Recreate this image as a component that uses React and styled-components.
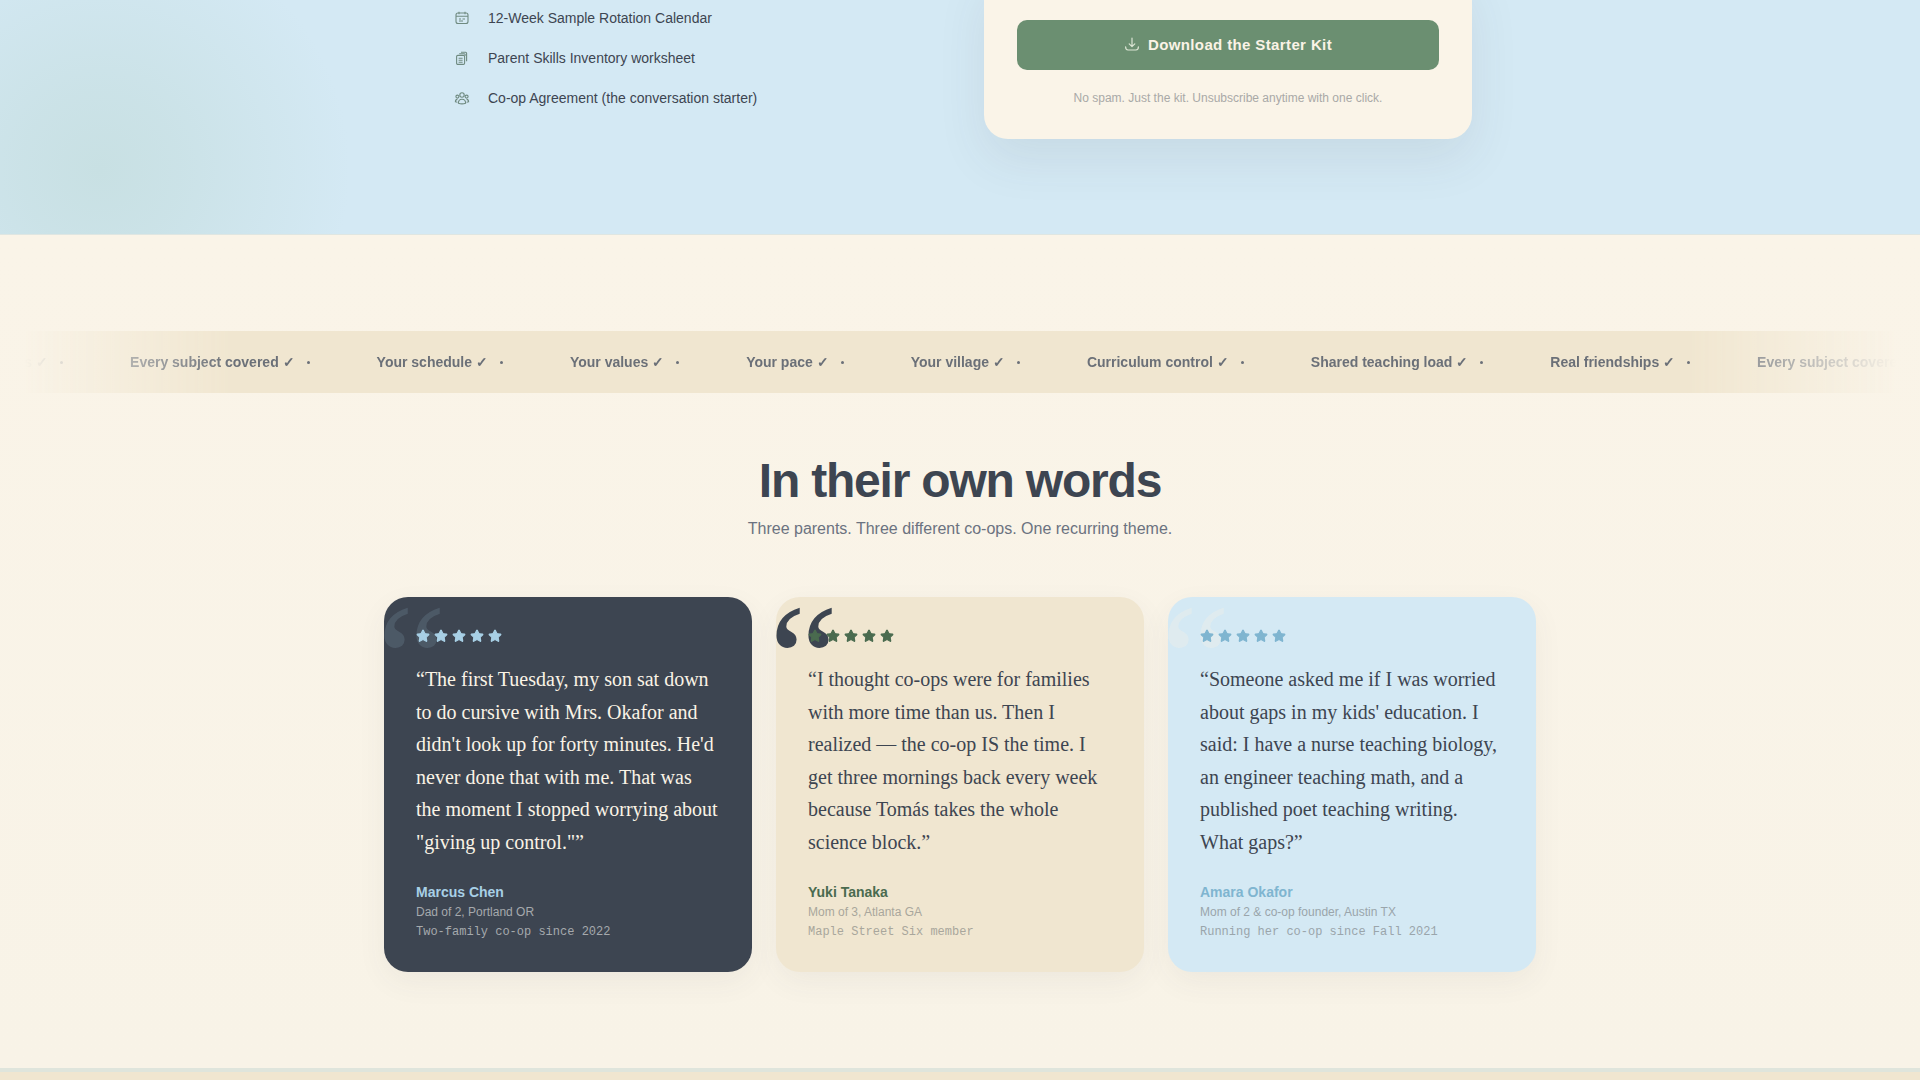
import React from "react";
import styled, { createGlobalStyle } from "styled-components";
import { Star } from "lucide-react";

const GlobalStyle = createGlobalStyle`
  html, body {
    margin: 0;
    padding: 0;
    background: #faf4e8;
    font-family: "Liberation Sans", Arial, sans-serif;
    line-height: 1.625;
    overflow: hidden;
  }
  * {
    box-sizing: border-box;
  }
`;

const Page = styled.div`
  height: 1080px;
  overflow: hidden;
  display: flex;
  flex-direction: column;
`;

const Hero = styled.section`
  height: 235px;
  flex-shrink: 0;
  background: radial-gradient(circle at 100px 170px, #c8e0e3 0, rgba(200, 224, 227, 0.75) 80px, rgba(212, 233, 244, 0) 250px), #d4e9f4;
  border-bottom: 1px solid #dfe6e2;
`;

const HeroInner = styled.div`
  width: 1024px;
  margin: 0 auto;
  display: grid;
  grid-template-columns: 1fr 488px;
`;

const KitList = styled.ul`
  list-style: none;
  margin: -2px 0 0;
  padding: 0 0 0 6px;
`;

const KitItem = styled.li`
  height: 40px;
  display: flex;
  align-items: center;
  gap: 18px;
  font-size: 14px;
  color: #3d4551;
  svg {
    flex-shrink: 0;
    color: #6f8a80;
  }
`;

const KitCard = styled.div`
  margin-top: -30px;
  height: 169px;
  padding: 50px 33px 0;
  background: #faf4e8;
  border-radius: 24px;
  box-shadow: 0 20px 50px rgba(61, 69, 81, 0.09);
`;

const DownloadButton = styled.button`
  width: 100%;
  height: 50px;
  padding: 0 0 2px;
  border: none;
  border-radius: 10px;
  background: #6b8f71;
  color: #faf3e6;
  font-family: inherit;
  font-size: 15px;
  font-weight: 700;
  letter-spacing: 0.375px;
  display: flex;
  align-items: center;
  justify-content: center;
  gap: 8px;
  svg {
    color: #dbe5d4;
  }
`;

const Fineprint = styled.p`
  margin: 19px 0 0;
  font-size: 12px;
  line-height: 19.5px;
  text-align: center;
  color: #a9a9a7;
`;

const Words = styled.section`
  flex: 1;
  padding-top: 96px;
  background: linear-gradient(180deg, #faf4e8 0%, #f8f3e7 100%);
`;

const Marquee = styled.div`
  height: 62px;
  overflow: hidden;
  background: #f0e6d0;
  display: flex;
  align-items: center;
  mask-image: linear-gradient(90deg, transparent 24px, #000 232px, #000 1688px, transparent 1896px);
`;

const Track = styled.div`
  display: flex;
  align-items: center;
  flex-shrink: 0;
  white-space: nowrap;
  transform: translateX(-1497px);
`;

const TickerItem = styled.span`
  font-size: 14px;
  font-weight: 700;
  color: #6b7078;
  display: flex;
  align-items: center;
`;

const TickerDot = styled.i`
  width: 3px;
  height: 3px;
  border-radius: 50%;
  background: #6b7078;
  margin: 0 67px 0 12px;
`;

const Heading = styled.h2`
  margin: 64px 0 0;
  font-size: 48px;
  line-height: 48px;
  font-weight: 700;
  letter-spacing: -1.2px;
  text-align: center;
  color: #3d4551;
`;

const Subtitle = styled.p`
  margin: 11px 0 0;
  font-size: 16px;
  line-height: 26px;
  text-align: center;
  color: #6b7280;
`;

const Cards = styled.div`
  width: 1152px;
  margin: 55px auto 0;
  display: grid;
  grid-template-columns: repeat(3, 368px);
  gap: 24px;
`;

const tones = {
  dark: { bg: "#3d4551", text: "#faf3e6", star: "#a8d0e6", name: "#a8d0e6", meta: "#a5a9ad", mark: "rgba(168, 208, 230, 0.15)" },
  sand: { bg: "#f0e6d0", text: "#3d4551", star: "#4a6b4f", name: "#4a6b4f", meta: "#a9a69c", mark: "#3d4551" },
  sky: { bg: "#d4e9f4", text: "#3d4551", star: "#7fb5d0", name: "#7fb5d0", meta: "#9aa5ab", mark: "rgba(250, 243, 230, 0.3)" },
};

const Card = styled.article`
  position: relative;
  height: 375px;
  padding: 32px;
  border-radius: 24px;
  background: ${(p) => tones[p.$tone].bg};
  box-shadow: 0 10px 30px rgba(61, 69, 81, 0.06);
`;

const QuoteMark = styled.span`
  position: absolute;
  top: -15px;
  left: -7px;
  font-family: "Liberation Serif", "Times New Roman", serif;
  font-size: 156px;
  line-height: 156px;
  color: ${(p) => tones[p.$tone].mark};
`;

const Stars = styled.div`
  position: relative;
  display: flex;
  gap: 4px;
  height: 14px;
  margin-bottom: 20px;
  color: ${(p) => tones[p.$tone].star};
`;

const Quote = styled.p`
  margin: 0 0 23px;
  font-family: "Liberation Serif", "Times New Roman", serif;
  font-size: 20px;
  line-height: 32.5px;
  color: ${(p) => tones[p.$tone].text};
`;

const Name = styled.div`
  font-size: 14px;
  line-height: 22px;
  font-weight: 700;
  color: ${(p) => tones[p.$tone].name};
`;

const Meta = styled.div`
  font-size: 12px;
  line-height: 19.5px;
  color: ${(p) => tones[p.$tone].meta};
`;

const MonoMeta = styled(Meta)`
  font-family: "Liberation Mono", "Courier New", monospace;
`;

const FooterBar = styled.div`
  height: 12px;
  flex-shrink: 0;
  background: #f0e6d0;
  border-top: 4px solid #dfe5dc;
`;

const CalendarIcon = () => (
  <svg width="16" height="16" viewBox="0 0 16 16" fill="none" stroke="currentColor" strokeWidth="1.1">
    <rect x="2" y="3" width="12" height="10.5" rx="2" />
    <path d="M2 6.2h12M5 1.8v2.4M11 1.8v2.4M5 9h2M8.5 9h2.5M5 11h4" />
  </svg>
);

const FilesIcon = () => (
  <svg width="16" height="16" viewBox="0 0 16 16" fill="none" stroke="currentColor" strokeWidth="1.1">
    <path d="M7 2.2h4.6a1 1 0 0 1 1 1v8" />
    <path d="M5.2 3.8h5a1 1 0 0 1 1 1v1" />
    <rect x="2.6" y="5.4" width="8" height="9" rx="1.2" />
    <path d="M4.6 8.2h4M4.6 10.2h4M4.6 12.2h4" />
  </svg>
);

const GroupIcon = () => (
  <svg width="16" height="16" viewBox="0 0 16 16" fill="none" stroke="currentColor" strokeWidth="1.1">
    <circle cx="8" cy="5" r="2.2" />
    <circle cx="3.4" cy="6.6" r="1.5" />
    <circle cx="12.6" cy="6.6" r="1.5" />
    <path d="M4.4 13.2c0-2.6 1.5-4 3.6-4s3.6 1.4 3.6 4c-2 .8-5.2.8-7.2 0z" />
    <path d="M3.4 9.4c-1.2.1-2 1-2 2.4.6.3 1.3.4 2 .4M12.6 9.4c1.2.1 2 1 2 2.4-.6.3-1.3.4-2 .4" />
  </svg>
);

const TrayDownIcon = () => (
  <svg width="16" height="16" viewBox="0 0 16 16" fill="none" stroke="currentColor" strokeWidth="1.2" strokeLinecap="round" strokeLinejoin="round">
    <path d="M8 2v8.4M5.2 7.8 8 10.6l2.8-2.8" />
    <path d="M1.6 10.8c0 2.2 1 3.2 2.4 3.2h8c1.4 0 2.4-1 2.4-3.2" />
  </svg>
);

const kitItems = [
  { icon: <CalendarIcon />, label: "12-Week Sample Rotation Calendar" },
  { icon: <FilesIcon />, label: "Parent Skills Inventory worksheet" },
  { icon: <GroupIcon />, label: "Co-op Agreement (the conversation starter)" },
];

const tickerItems = [
  "Every subject covered",
  "Your schedule",
  "Your values",
  "Your pace",
  "Your village",
  "Curriculum control",
  "Shared teaching load",
  "Real friendships",
];

const testimonials = [
  {
    tone: "dark",
    quote: "“The first Tuesday, my son sat down to do cursive with Mrs. Okafor and didn't look up for forty minutes. He'd never done that with me. That was the moment I stopped worrying about \"giving up control.\"”",
    name: "Marcus Chen",
    role: "Dad of 2, Portland OR",
    since: "Two-family co-op since 2022",
  },
  {
    tone: "sand",
    quote: "“I thought co-ops were for families with more time than us. Then I realized — the co-op IS the time. I get three mornings back every week because Tomás takes the whole science block.”",
    name: "Yuki Tanaka",
    role: "Mom of 3, Atlanta GA",
    since: "Maple Street Six member",
  },
  {
    tone: "sky",
    quote: "“Someone asked me if I was worried about gaps in my kids' education. I said: I have a nurse teaching biology, an engineer teaching math, and a published poet teaching writing. What gaps?”",
    name: "Amara Okafor",
    role: "Mom of 2 & co-op founder, Austin TX",
    since: "Running her co-op since Fall 2021",
  },
];

const App = () => {
  return (
    <Page>
      <GlobalStyle />
      <Hero>
        <HeroInner>
          <KitList>
            {kitItems.map((item) => (
              <KitItem key={item.label}>
                {item.icon}
                {item.label}
              </KitItem>
            ))}
          </KitList>
          <KitCard>
            <DownloadButton>
              <TrayDownIcon />
              Download the Starter Kit
            </DownloadButton>
            <Fineprint>No spam. Just the kit. Unsubscribe anytime with one click.</Fineprint>
          </KitCard>
        </HeroInner>
      </Hero>
      <Words>
        <Marquee>
          <Track>
            {[...tickerItems, ...tickerItems, ...tickerItems].map((item, i) => (
              <TickerItem key={i}>
                {item} ✓
                <TickerDot />
              </TickerItem>
            ))}
          </Track>
        </Marquee>
        <Heading>In their own words</Heading>
        <Subtitle>Three parents. Three different co-ops. One recurring theme.</Subtitle>
        <Cards>
          {testimonials.map((t) => (
            <Card key={t.name} $tone={t.tone}>
              <QuoteMark $tone={t.tone}>“</QuoteMark>
              <Stars $tone={t.tone}>
                {[0, 1, 2, 3, 4].map((n) => (
                  <Star key={n} size={14} fill="currentColor" />
                ))}
              </Stars>
              <Quote $tone={t.tone}>{t.quote}</Quote>
              <Name $tone={t.tone}>{t.name}</Name>
              <Meta $tone={t.tone}>{t.role}</Meta>
              <MonoMeta $tone={t.tone}>{t.since}</MonoMeta>
            </Card>
          ))}
        </Cards>
      </Words>
      <FooterBar />
    </Page>
  );
};

export default App;
